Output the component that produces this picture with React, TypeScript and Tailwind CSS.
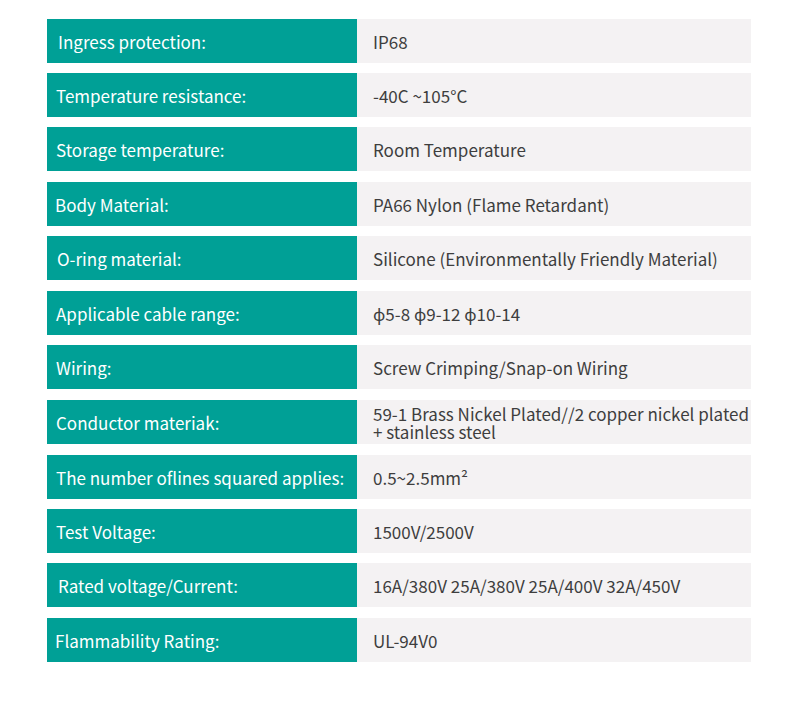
const specs = [
  { label: "Ingress protection:", value: "IP68", pad: "pl-[11px]", mt: "mt-0" },
  { label: "Temperature resistance:", value: "-40C ~105°C", pad: "pl-[9px]", mt: "mt-[10px]" },
  { label: "Storage temperature:", value: "Room Temperature", pad: "pl-[9px]", mt: "mt-[10px]" },
  { label: "Body Material:", value: "PA66 Nylon (Flame Retardant)", pad: "pl-[8px]", mt: "mt-[11px]" },
  { label: "O-ring material:", value: "Silicone (Environmentally Friendly Material)", pad: "pl-[10px]", mt: "mt-[10px]" },
  { label: "Applicable cable range:", value: "ϕ5-8 ϕ9-12 ϕ10-14", pad: "pl-[9px]", mt: "mt-[11px]" },
  { label: "Wiring:", value: "Screw Crimping/Snap-on Wiring", pad: "pl-[9px]", mt: "mt-[10px]" },
  { label: "Conductor materiak:", value: "59-1 Brass Nickel Plated//2 copper nickel plated\n+ stainless steel", pad: "pl-[9px]", mt: "mt-[11px]" },
  { label: "The number oflines squared applies:", value: "0.5~2.5mm²", pad: "pl-[9px]", mt: "mt-[11px]" },
  { label: "Test Voltage:", value: "1500V/2500V", pad: "pl-[9px]", mt: "mt-[10px]" },
  { label: "Rated voltage/Current:", value: "16A/380V 25A/380V 25A/400V 32A/450V", pad: "pl-[11px]", mt: "mt-[10px]" },
  { label: "Flammability Rating:", value: "UL-94V0", pad: "pl-[8px]", mt: "mt-[11px]" },
];

export default function App() {
  return (
    <div className="w-[794px] h-[702px] bg-white pt-[19px] pl-[47px] font-['Noto_Sans_CJK_SC','Noto_Sans',sans-serif]">
      <div className="flex flex-col w-[704px]">
        {specs.map((row) => (
          <div key={row.label} className={`flex h-[44px] ${row.mt}`}>
            <div className={`w-[310px] shrink-0 bg-[#00a096] flex items-center pt-[2px] text-white text-[17px] whitespace-nowrap ${row.pad}`}>
              {row.label}
            </div>
            <div className="flex-1 bg-[#f4f2f3] flex items-center pt-[2px] pl-[16px] text-[#3e3e3e] text-[17px] leading-[18px] whitespace-pre-line">
              {row.value}
            </div>
          </div>
        ))}
      </div>
    </div>
  );
}
